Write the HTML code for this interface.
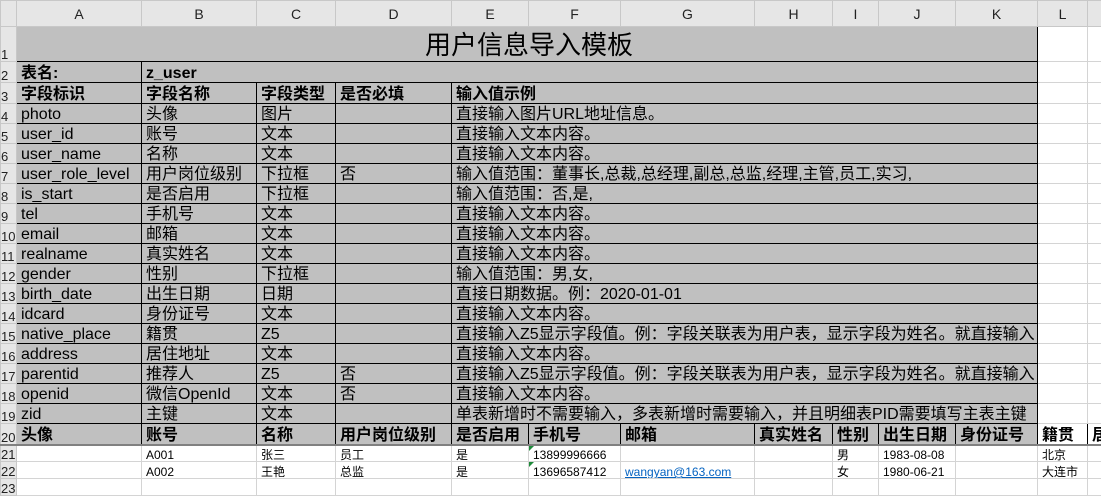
<!DOCTYPE html>
<html><head><meta charset="utf-8"><style>
body{margin:0;width:1101px;height:494px;overflow:hidden;background:#fff;font-family:"Liberation Sans","Noto Sans CJK SC",sans-serif;}
table{border-collapse:collapse;table-layout:fixed;position:absolute;left:0;top:0;width:1101px;}
td{padding:0 0 0 4px;border:1px solid #d4d4d4;white-space:nowrap;overflow:hidden;font-size:16px;color:#000;line-height:17px;vertical-align:bottom;}
td.h{background:#e6e6e6;text-align:center;padding:0;font-size:14px;color:#222;border-color:#c8c8c8;vertical-align:middle;line-height:14px;}
td.rn{background:#e6e6e6;padding:0;font-size:13px;line-height:13px;color:#222;border-color:#c8c8c8;text-align:left;}
td.g{background:#c0c0c0;border:1px solid #000;}
td.b{font-weight:bold;}
td.s{font-size:12px;line-height:13px;}
tr.r20 td{border-bottom:2px solid #808080;}
tr.e td{line-height:12px;}
a{color:#0563c1;text-decoration:underline;}
.tri{position:relative}
.tri:before{content:"";position:absolute;left:0;top:0;border-top:5px solid #1e8a3a;border-right:5px solid transparent;}
</style></head><body>
<table>
<colgroup><col style="width:16px"><col style="width:125px"><col style="width:115px"><col style="width:79px"><col style="width:116px"><col style="width:77px"><col style="width:92px"><col style="width:134px"><col style="width:78px"><col style="width:46px"><col style="width:77px"><col style="width:82px"><col style="width:50px"><col style="width:14px"></colgroup>
<tr style="height:26px"><td class="h"></td><td class="h">A</td><td class="h">B</td><td class="h">C</td><td class="h">D</td><td class="h">E</td><td class="h">F</td><td class="h">G</td><td class="h">H</td><td class="h">I</td><td class="h">J</td><td class="h">K</td><td class="h">L</td><td class="h"></td></tr>
<tr style="height:35px"><td class="rn">1</td><td class="g" colspan="11" style="text-align:center;font-size:26px;line-height:32px;">用户信息导入模板</td><td></td><td></td></tr>
<tr style="height:21px"><td class="rn">2</td><td class="g b">表名:</td><td class="g b" colspan="10">z_user</td><td></td><td></td></tr>
<tr style="height:21px"><td class="rn">3</td><td class="g b">字段标识</td><td class="g b">字段名称</td><td class="g b">字段类型</td><td class="g b">是否必填</td><td class="g b" colspan="7">输入值示例</td><td></td><td></td></tr>
<tr style="height:20px"><td class="rn">4</td><td class="g">photo</td><td class="g">头像</td><td class="g">图片</td><td class="g"></td><td class="g" colspan="7">直接输入图片URL地址信息。</td><td></td><td></td></tr>
<tr style="height:20px"><td class="rn">5</td><td class="g">user_id</td><td class="g">账号</td><td class="g">文本</td><td class="g"></td><td class="g" colspan="7">直接输入文本内容。</td><td></td><td></td></tr>
<tr style="height:20px"><td class="rn">6</td><td class="g">user_name</td><td class="g">名称</td><td class="g">文本</td><td class="g"></td><td class="g" colspan="7">直接输入文本内容。</td><td></td><td></td></tr>
<tr style="height:20px"><td class="rn">7</td><td class="g">user_role_level</td><td class="g">用户岗位级别</td><td class="g">下拉框</td><td class="g">否</td><td class="g" colspan="7">输入值范围：董事长,总裁,总经理,副总,总监,经理,主管,员工,实习,</td><td></td><td></td></tr>
<tr style="height:20px"><td class="rn">8</td><td class="g">is_start</td><td class="g">是否启用</td><td class="g">下拉框</td><td class="g"></td><td class="g" colspan="7">输入值范围：否,是,</td><td></td><td></td></tr>
<tr style="height:20px"><td class="rn">9</td><td class="g">tel</td><td class="g">手机号</td><td class="g">文本</td><td class="g"></td><td class="g" colspan="7">直接输入文本内容。</td><td></td><td></td></tr>
<tr style="height:20px"><td class="rn">10</td><td class="g">email</td><td class="g">邮箱</td><td class="g">文本</td><td class="g"></td><td class="g" colspan="7">直接输入文本内容。</td><td></td><td></td></tr>
<tr style="height:20px"><td class="rn">11</td><td class="g">realname</td><td class="g">真实姓名</td><td class="g">文本</td><td class="g"></td><td class="g" colspan="7">直接输入文本内容。</td><td></td><td></td></tr>
<tr style="height:20px"><td class="rn">12</td><td class="g">gender</td><td class="g">性别</td><td class="g">下拉框</td><td class="g"></td><td class="g" colspan="7">输入值范围：男,女,</td><td></td><td></td></tr>
<tr style="height:20px"><td class="rn">13</td><td class="g">birth_date</td><td class="g">出生日期</td><td class="g">日期</td><td class="g"></td><td class="g" colspan="7">直接日期数据。例：2020-01-01</td><td></td><td></td></tr>
<tr style="height:20px"><td class="rn">14</td><td class="g">idcard</td><td class="g">身份证号</td><td class="g">文本</td><td class="g"></td><td class="g" colspan="7">直接输入文本内容。</td><td></td><td></td></tr>
<tr style="height:20px"><td class="rn">15</td><td class="g">native_place</td><td class="g">籍贯</td><td class="g">Z5</td><td class="g"></td><td class="g" colspan="7">直接输入Z5显示字段值。例：字段关联表为用户表，显示字段为姓名。就直接输入</td><td></td><td></td></tr>
<tr style="height:20px"><td class="rn">16</td><td class="g">address</td><td class="g">居住地址</td><td class="g">文本</td><td class="g"></td><td class="g" colspan="7">直接输入文本内容。</td><td></td><td></td></tr>
<tr style="height:20px"><td class="rn">17</td><td class="g">parentid</td><td class="g">推荐人</td><td class="g">Z5</td><td class="g">否</td><td class="g" colspan="7">直接输入Z5显示字段值。例：字段关联表为用户表，显示字段为姓名。就直接输入</td><td></td><td></td></tr>
<tr style="height:20px"><td class="rn">18</td><td class="g">openid</td><td class="g">微信OpenId</td><td class="g">文本</td><td class="g">否</td><td class="g" colspan="7">直接输入文本内容。</td><td></td><td></td></tr>
<tr style="height:20px"><td class="rn">19</td><td class="g">zid</td><td class="g">主键</td><td class="g">文本</td><td class="g"></td><td class="g" colspan="7">单表新增时不需要输入，多表新增时需要输入，并且明细表PID需要填写主表主键</td><td></td><td></td></tr>
<tr class="r20" style="height:21px"><td class="rn">20</td><td class="g b">头像</td><td class="g b">账号</td><td class="g b">名称</td><td class="g b">用户岗位级别</td><td class="g b">是否启用</td><td class="g b">手机号</td><td class="g b">邮箱</td><td class="g b">真实姓名</td><td class="g b">性别</td><td class="g b">出生日期</td><td class="g b">身份证号</td><td class="b" style="border:1px solid #000;border-bottom:2px solid #808080">籍贯</td><td class="b">居</td></tr>
<tr class="e" style="height:17px"><td class="rn">21</td><td class="s"></td><td class="s">A001</td><td class="s">张三</td><td class="s">员工</td><td class="s">是</td><td class="s tri">13899996666</td><td class="s"></td><td class="s"></td><td class="s">男</td><td class="s">1983-08-08</td><td class="s"></td><td class="s">北京</td><td class="s"></td></tr>
<tr class="e" style="height:17px"><td class="rn">22</td><td class="s"></td><td class="s">A002</td><td class="s">王艳</td><td class="s">总监</td><td class="s">是</td><td class="s tri">13696587412</td><td class="s"><a>wangyan@163.com</a></td><td class="s"></td><td class="s">女</td><td class="s">1980-06-21</td><td class="s"></td><td class="s">大连市</td><td class="s"></td></tr>
<tr class="e" style="height:17px"><td class="rn">23</td><td></td><td></td><td></td><td></td><td></td><td></td><td></td><td></td><td></td><td></td><td></td><td></td><td></td></tr>
</table>
</body></html>
